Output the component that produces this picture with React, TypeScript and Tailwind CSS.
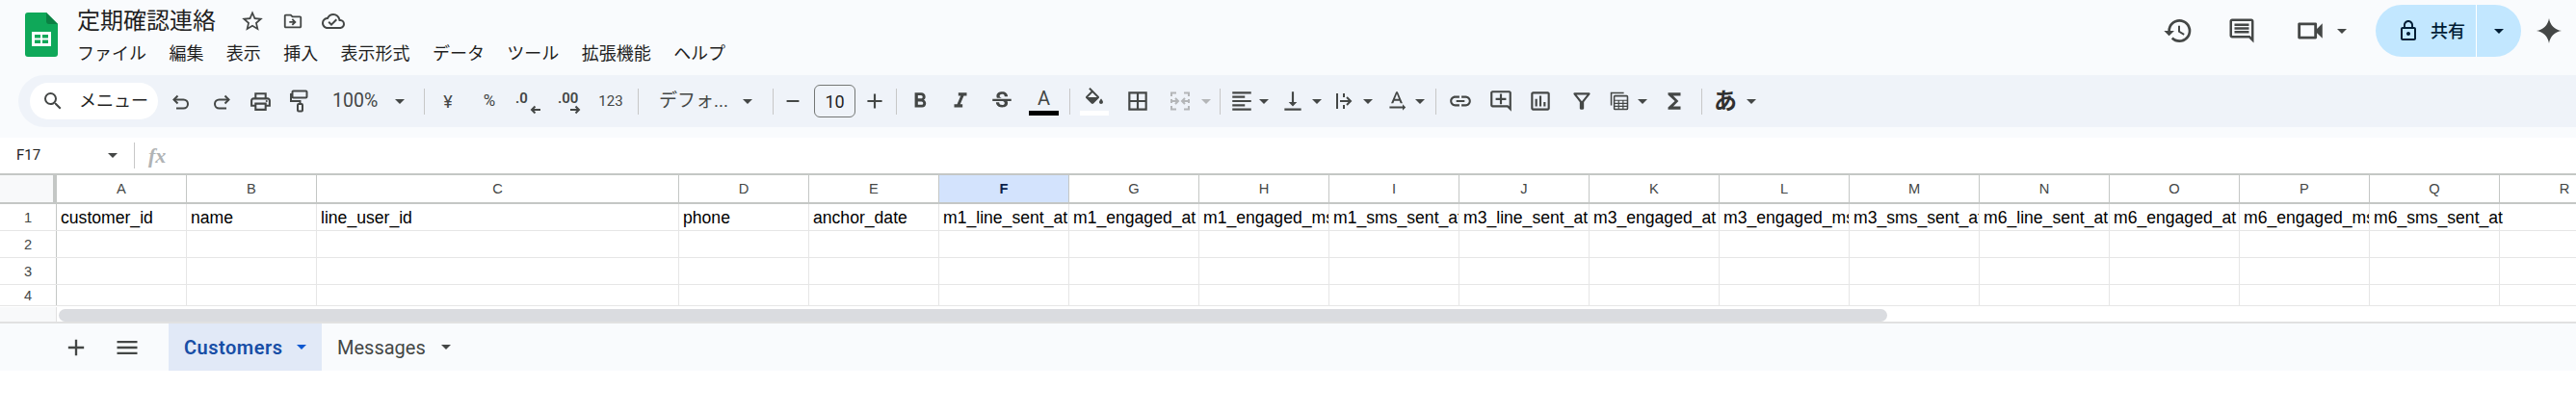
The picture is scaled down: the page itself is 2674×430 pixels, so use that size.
import React from "react";
import {
  MdStarBorder, MdOutlineDriveFileMove, MdOutlineCloudDone, MdOutlinePrint,
  MdRemove, MdAdd, MdFormatBold, MdFormatItalic, MdStrikethroughS, MdBorderAll,
  MdFormatAlignLeft, MdVerticalAlignBottom, MdTextRotationNone, MdLink, MdOutlineAddComment, MdOutlineInsertChart,
  MdOutlineFilterAlt, MdFunctions, MdHistory, MdOutlineComment, MdOutlineVideocam, MdLockOutline, MdMenu, MdSearch,
} from "react-icons/md";

const UI = "font-['Roboto','Noto_Sans_CJK_JP',sans-serif]";

function Caret({ className = "text-[#444746]" }: { className?: string }) {
  return (
    <svg width="10" height="5" viewBox="0 0 10 5" className={`shrink-0 ${className}`}>
      <path d="M0 0H10L5 5Z" fill="currentColor" />
    </svg>
  );
}

function S({ w, children }: { w: string; children?: React.ReactNode }) {
  return <div className={`${w} h-full shrink-0 flex items-center justify-center text-[#444746]`}>{children}</div>;
}

function Sep({ w }: { w: string }) {
  return (
    <S w={w}>
      <div className="w-px h-[27px] bg-[#c7c7c7] shrink-0" />
    </S>
  );
}

const UndoIcon = () => (
  <svg width="20" height="20" viewBox="0 0 20 20" fill="none" stroke="currentColor" strokeWidth="2" className="mt-[3px]">
    <path d="M6.5 2.5L2.5 6.5L6.5 10.5" />
    <path d="M2.5 6.5H12.5A4.5 4.5 0 0 1 12.5 15.5H5" />
  </svg>
);

const RedoIcon = () => (
  <svg width="20" height="20" viewBox="0 0 20 20" fill="none" stroke="currentColor" strokeWidth="2" className="mt-[3px]">
    <path d="M13.5 2.5L17.5 6.5L13.5 10.5" />
    <path d="M17.5 6.5H7.5A4.5 4.5 0 0 0 7.5 15.5H15" />
  </svg>
);

const PaintIcon = () => (
  <svg width="20" height="24" viewBox="0 0 20 24" fill="none" stroke="currentColor" strokeWidth="2">
    <rect x="2.5" y="1.5" width="15" height="7" rx="1" />
    <path d="M2.5 5H1V12H10.5V15" />
    <rect x="8" y="15" width="5" height="7.5" rx="1" />
  </svg>
);

const FillIcon = () => (
  <svg width="24" height="22" viewBox="0 0 24 20" fill="currentColor">
    <path d="M16.56 8.94 7.62 0 6.21 1.41l2.38 2.38-5.15 5.15c-.59.59-.59 1.54 0 2.12l5.5 5.5c.29.29.68.44 1.06.44s.77-.15 1.06-.44l5.5-5.5c.59-.58.59-1.53 0-2.12zM5.21 10 10 5.21 14.79 10H5.21zM19 11.5s-2 2.17-2 3.5c0 1.1.9 2 2 2s2-.9 2-2c0-1.33-2-3.5-2-3.5z" />
    <path d="M5 10H15L10 15.5Z" />
  </svg>
);

const WrapIcon = () => (
  <svg width="24" height="24" viewBox="0 0 24 24" fill="none" stroke="currentColor" strokeWidth="2">
    <path d="M4 4V20" />
    <path d="M11 4V8M11 16V20" />
    <path d="M7 12H18" />
    <path d="M14 8L18 12L14 16" />
  </svg>
);

const MergeIcon = () => (
  <svg width="22" height="20" viewBox="0 0 22 20" fill="none" stroke="#b4b6b8" strokeWidth="2">
    <path d="M7 1.5H2V5M2 8V12M2 15V18.5H7" />
    <path d="M15 1.5H20V5M20 8V12M20 15V18.5H15" />
    <path d="M3 10H8.5M6 7L9 10L6 13" />
    <path d="M19 10H13.5M16 7L13 10L16 13" />
  </svg>
);

const CalcIcon = () => (
  <svg width="26" height="26" viewBox="0 0 26 26" fill="none" stroke="currentColor" strokeWidth="2">
    <path d="M2 19V2H19" />
    <rect x="6" y="6" width="18" height="18" rx="1" />
    <path d="M6 12H24M6 16H24M6 20H24M12 12V24M18 12V24" strokeWidth="1.5" />
  </svg>
);

const SheetsLogo = () => (
  <svg width="34" height="46" viewBox="0 0 34 46">
    <path d="M3 0H22L34 12V43A3 3 0 0 1 31 46H3A3 3 0 0 1 0 43V3A3 3 0 0 1 3 0Z" fill="#0fa859" />
    <path d="M22 0L34 12H25A3 3 0 0 1 22 9Z" fill="#0b8043" />
    <path d="M7 20H27V35H7Z" fill="#fff" />
    <path d="M10 23H16V26.5H10ZM18 23H24V26.5H18ZM10 28.5H16V32H10ZM18 28.5H24V32H18Z" fill="#0fa859" />
  </svg>
);

const menus = ["ファイル", "編集", "表示", "挿入", "表示形式", "データ", "ツール", "拡張機能", "ヘルプ"];

const columns: { l: string; w: string; t?: string }[] = [
  { l: "A", w: "w-[135px]", t: "customer_id" },
  { l: "B", w: "w-[135px]", t: "name" },
  { l: "C", w: "w-[376px]", t: "line_user_id" },
  { l: "D", w: "w-[135px]", t: "phone" },
  { l: "E", w: "w-[135px]", t: "anchor_date" },
  { l: "F", w: "w-[135px]", t: "m1_line_sent_at" },
  { l: "G", w: "w-[135px]", t: "m1_engaged_at" },
  { l: "H", w: "w-[135px]", t: "m1_engaged_msg" },
  { l: "I", w: "w-[135px]", t: "m1_sms_sent_at" },
  { l: "J", w: "w-[135px]", t: "m3_line_sent_at" },
  { l: "K", w: "w-[135px]", t: "m3_engaged_at" },
  { l: "L", w: "w-[135px]", t: "m3_engaged_msg" },
  { l: "M", w: "w-[135px]", t: "m3_sms_sent_at" },
  { l: "N", w: "w-[135px]", t: "m6_line_sent_at" },
  { l: "O", w: "w-[135px]", t: "m6_engaged_at" },
  { l: "P", w: "w-[135px]", t: "m6_engaged_msg" },
  { l: "Q", w: "w-[135px]", t: "m6_sms_sent_at" },
  { l: "R", w: "w-[135px]" },
];

const rows = [
  { n: 1, h: "h-[28px]" },
  { n: 2, h: "h-[28px]" },
  { n: 3, h: "h-[28px]" },
  { n: 4, h: "h-[22px]" },
];

function Toolbar() {
  return (
    <div className="ml-[19px] mt-[2px] h-[54px] rounded-l-[27px] bg-[#eff3f9] flex pl-3 overflow-hidden">
      <div className="w-[133px] shrink-0 my-2 rounded-full bg-white flex items-center pl-3 text-[#1f1f1f]">
        <MdSearch size={24} className="text-[#444746] shrink-0" />
        <span className="ml-[15px] text-[18px] leading-none whitespace-nowrap">メニュー</span>
      </div>
      <S w="w-[42px] ml-[3px]"><UndoIcon /></S>
      <S w="w-[42px]"><RedoIcon /></S>
      <S w="w-[39px]"><MdOutlinePrint size={25} /></S>
      <S w="w-[42px]"><PaintIcon /></S>
      <div className="w-[102px] shrink-0 flex items-center pl-[13px] text-[#444746]">
        <span className="text-[19.5px]">100%</span>
        <Caret className="ml-[18px] text-[#444746]" />
      </div>
      <Sep w="w-[12px]" />
      <S w="w-[38px]"><span className="text-[18px]">¥</span></S>
      <S w="w-[48px]"><span className="text-[17px]">%</span></S>
      <S w="w-[32px]">
        <div className="relative w-[26px] h-[30px]">
          <span className="absolute left-0 top-[5px] text-[15px] font-semibold leading-none">.0</span>
          <svg width="11" height="10" viewBox="0 0 11 10" className="absolute right-0 bottom-[1px]"><path d="M11 5H2M5.5 1.5L2 5L5.5 8.5" fill="none" stroke="currentColor" strokeWidth="2" /></svg>
        </div>
      </S>
      <S w="w-[54px]">
        <div className="relative w-[24px] h-[30px]">
          <span className="absolute left-0 top-[5px] text-[15px] font-semibold leading-none">.00</span>
          <svg width="11" height="10" viewBox="0 0 11 10" className="absolute right-0 bottom-[1px]"><path d="M0 5H9M5.5 1.5L9 5L5.5 8.5" fill="none" stroke="currentColor" strokeWidth="2" /></svg>
        </div>
      </S>
      <S w="w-[32px]"><span className="text-[15px]">123</span></S>
      <Sep w="w-[24px]" />
      <div className="w-[118px] shrink-0 flex items-center pl-[10px] text-[#444746]">
        <span className="w-[87px] text-[19px] whitespace-nowrap">デフォ...</span>
        <Caret />
      </div>
      <Sep w="w-[20px]" />
      <S w="w-[22px]"><MdRemove size={24} /></S>
      <div className="ml-[11px] w-[43px] my-[10px] shrink-0 rounded-[6px] border border-[#747775] flex items-center justify-center text-[18px] text-[#1f1f1f]">10</div>
      <S w="w-[40px]"><MdAdd size={26} /></S>
      <Sep w="w-[4px]" />
      <S w="w-[46px]"><MdFormatBold size={26} /></S>
      <S w="w-[38px]"><MdFormatItalic size={26} /></S>
      <S w="w-[48px]"><MdStrikethroughS size={26} /></S>
      <S w="w-[39px]">
        <div className="flex flex-col items-center w-[32px]">
          <span className="text-[20px] leading-[22px]">A</span>
          <div className="w-[31px] h-[5px] mt-[2px] bg-black" />
        </div>
      </S>
      <Sep w="w-[14px]" />
      <S w="w-[38px]">
        <div className="flex flex-col items-center w-[32px]">
          <FillIcon />
          <div className="w-[30px] h-[5px] mt-[3px] bg-white" />
        </div>
      </S>
      <S w="w-[52px]"><MdBorderAll size={26} /></S>
      <S w="w-[36px]"><MergeIcon /></S>
      <S w="w-[18px]"><Caret className="text-[#b4b6b8]" /></S>
      <Sep w="w-[10px]" />
      <S w="w-[36px]"><MdFormatAlignLeft size={26} /></S>
      <S w="w-[10px]"><Caret /></S>
      <S w="w-[41px] ml-[4px]"><MdVerticalAlignBottom size={26} /></S>
      <S w="w-[10px]"><Caret /></S>
      <S w="w-[38px] ml-[5px]"><WrapIcon /></S>
      <S w="w-[10px]"><Caret /></S>
      <S w="w-[38px] ml-[6px]"><MdTextRotationNone size={26} /></S>
      <S w="w-[10px]"><Caret /></S>
      <Sep w="w-[22px]" />
      <S w="w-[30px]"><MdLink size={26} /></S>
      <S w="w-[54px]"><MdOutlineAddComment size={26} /></S>
      <S w="w-[28px]"><MdOutlineInsertChart size={26} /></S>
      <S w="w-[58px]"><MdOutlineFilterAlt size={26} /></S>
      <S w="w-[20px]"><CalcIcon /></S>
      <S w="w-[28px]"><Caret /></S>
      <S w="w-[38px]"><MdFunctions size={26} /></S>
      <Sep w="w-[18px]" />
      <S w="w-[32px]"><span className="text-[24px] font-bold text-[#303030]">あ</span></S>
      <S w="w-[22px]"><Caret /></S>
    </div>
  );
}

function Header() {
  return (
    <div className="h-[76px] flex">
      <div className="ml-[26px] mt-[13px] shrink-0"><SheetsLogo /></div>
      <div className="ml-[20px] shrink-0">
        <div className="h-[44px] flex items-center">
          <span className="text-[24px] leading-none text-[#1f1f1f]">定期確認連絡</span>
          <span className="ml-[25px] flex items-center text-[#444746]">
            <MdStarBorder size={26} />
            <MdOutlineDriveFileMove size={22} className="ml-[18px]" />
            <MdOutlineCloudDone size={24} className="ml-[19px]" />
          </span>
        </div>
        <div className="flex gap-[23.4px] text-[18px] leading-[24px] text-[#1f1f1f] whitespace-nowrap">
          {menus.map((m) => <span key={m}>{m}</span>)}
        </div>
      </div>
      <div className="ml-auto flex items-start pt-[5px] shrink-0">
        <div className="h-[54px] flex items-center text-[#444746]">
          <MdHistory size={32} />
          <MdOutlineComment size={30} className="ml-[35px]" />
          <MdOutlineVideocam size={34} className="ml-[39px]" />
          <Caret className="ml-[11px] text-[#444746]" />
        </div>
        <div className="ml-[30px] w-[151px] h-[54px] rounded-full bg-[#c2e7ff] flex text-[#001d35]">
          <div className="w-[105px] flex items-center pl-[22px] border-r border-white">
            <MdLockOutline size={24} />
            <span className="ml-[11px] text-[18px] font-medium">共有</span>
          </div>
          <div className="flex-1 flex items-center justify-center"><Caret className="text-[#001d35]" /></div>
        </div>
        <div className="w-[57px] h-[54px] flex items-center justify-center">
          <svg width="26" height="26" viewBox="0 0 26 26"><path d="M13 0C14 7 19 12 26 13C19 14 14 19 13 26C12 19 7 14 0 13C7 12 12 7 13 0Z" fill="#444746" /></svg>
        </div>
      </div>
    </div>
  );
}

function Grid() {
  return (
    <div className="font-['Liberation_Sans',Arial,sans-serif] overflow-hidden border-t-2 border-[#c4c7c5] h-[139px] flex flex-col">
      <div className="flex h-[30px] shrink-0 border-b-2 border-[#c4c7c5]">
        <div className="w-[59px] shrink-0 bg-[#f8f9fa] border-r-4 border-[#c4c7c5]" />
        {columns.map((c) => (
          <div key={c.l} className={`${c.w} shrink-0 border-r border-[#c4c7c5] flex items-center justify-center text-[14.67px] ${c.l === "F" ? "bg-[#d3e3fd] font-bold text-[#0b1f4b]" : "text-[#444746]"}`}>
            {c.l}
          </div>
        ))}
      </div>
      {rows.map((r) => (
        <div key={r.n} className={`flex ${r.h} shrink-0 border-b border-[#e6e6e6]`}>
          <div className="w-[59px] shrink-0 border-r border-[#c4c7c5] flex items-center justify-center text-[14.67px] text-[#444746]">{r.n}</div>
          {columns.map((c) => (
            <div key={c.l} className={`${c.w} shrink-0 border-r border-[#e6e6e6] pl-[4px] whitespace-nowrap text-[17.6px] leading-[29px] text-black ${c.l === "Q" ? "relative z-10" : "overflow-hidden"}`}>
              {r.n === 1 ? c.t : ""}
            </div>
          ))}
        </div>
      ))}
    </div>
  );
}

export default function App() {
  return (
    <div className={`${UI} w-[2674px] h-[430px] bg-white overflow-hidden`}>
      <div className="bg-[#f9fbfd] h-[143px]">
        <Header />
        <Toolbar />
      </div>
      <div className="h-[37px] flex items-center bg-white">
        <span className="ml-[17px] w-[95px] text-[15px] text-[#1f1f1f]">F17</span>
        <Caret />
        <div className="ml-[17px] w-px h-[27px] bg-[#c7c7c7]" />
        <span className="ml-[14px] text-[22px] italic font-bold text-[#b0b3b5] font-['Liberation_Serif',serif]">fx</span>
      </div>
      <Grid />
      <div className="h-[17px] border-b-2 border-[#e1e1e1] flex">
        <div className="w-[59px] shrink-0 bg-[#f8f9fa] border-r border-[#e1e1e1]" />
        <div className="ml-[2px] mt-[2px] w-[1898px] h-[13px] rounded-full bg-[#dadce0]" />
      </div>
      <div className="h-[49px] bg-[#f9fbfd] flex items-stretch text-[#444746]">
        <div className="w-[175px] shrink-0 flex items-center">
          <MdAdd size={28} className="ml-[65px]" />
          <MdMenu size={28} className="ml-[25px]" />
        </div>
        <div className="w-[159px] shrink-0 bg-[#e1e9f7] flex items-center pl-[16px] text-[#0b57d0]">
          <span className="text-[20px] tracking-[0.5px] font-semibold text-[#174ea6]">Customers</span>
          <Caret className="ml-[15px] text-[#0b57d0]" />
        </div>
        <div className="flex items-center pl-[16px]">
          <span className="text-[20px]">Messages</span>
          <Caret className="ml-[16px]" />
        </div>
      </div>
    </div>
  );
}
